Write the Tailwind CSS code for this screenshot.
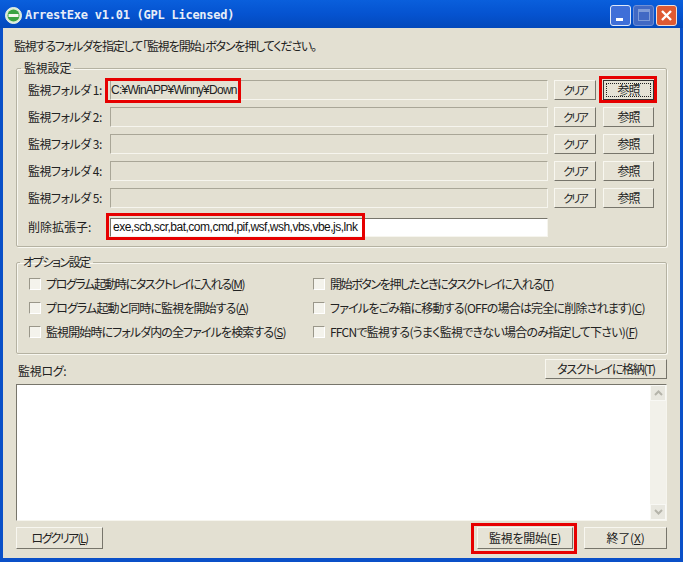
<!DOCTYPE html>
<html lang="ja">
<head>
    <meta charset="UTF-8">
    <title>ArrestExe v1.01 (GPL Licensed)</title>
    <script src="https://cdn.jsdelivr.net/npm/@tailwindcss/browser@4"></script>
</head>
<body class="w-[683px] h-[562px] overflow-hidden bg-[#e3e0d2] font-['Noto_Sans_CJK_JP',sans-serif] [font-feature-settings:'palt'] text-[12px] leading-none text-[#222]">
<div class="flex flex-col h-[562px]">

    <!-- title bar -->
    <div class="h-[28px] shrink-0 flex items-center pt-[2px] pl-[5px] pr-[6px] bg-gradient-to-b from-[#0a5fdc] via-[#0553d0] to-[#0349bb]">
        <svg width="17" height="17" viewBox="0 0 17 17" class="shrink-0">
            <circle cx="8.5" cy="8.5" r="8" fill="#d9ecd6" stroke="#eaf3e6"/>
            <circle cx="8.5" cy="8.5" r="6" fill="#39a341"/>
            <rect x="3.5" y="7" width="10" height="3" fill="#f3f7ee"/>
        </svg>
        <span class="ml-[3px] font-['DejaVu_Sans_Mono',monospace] font-bold text-[12px] tracking-[-0.25px] text-[#e8eef8] whitespace-nowrap">ArrestExe v1.01 (GPL Licensed)</span>
        <div class="ml-auto flex gap-[2px]">
            <div class="w-[21px] h-[21px] rounded-[3px] border border-[#dfe8f8] bg-[#3f6fd8] flex items-end pl-[5px] pb-[4px]">
                <div class="w-[7px] h-[3px] bg-white"></div>
            </div>
            <div class="w-[21px] h-[21px] rounded-[3px] border border-[#6f8fd4] bg-[#4169c4] flex items-center justify-center">
                <div class="w-[12px] h-[12px] border border-[#7f9cd8] border-t-[3px]"></div>
            </div>
            <div class="w-[21px] h-[21px] rounded-[3px] border border-[#f0e0d8] bg-[#df5a32] flex items-center justify-center">
                <svg width="13" height="13" viewBox="0 0 13 13"><path d="M2 2 11 11M11 2 2 11" stroke="#fff" stroke-width="2.4"/></svg>
            </div>
        </div>
    </div>

    <!-- client area -->
    <div class="flex-1 flex flex-col border-x-[3px] border-b-[4px] border-[#0a50c8] pl-[11px] pr-[13px] min-h-0">
        <p class="mt-[12px] h-[12px] whitespace-nowrap tracking-[-1.15px]">監視するフォルダを指定して「監視を開始」ボタンを押してください。</p>

        <!-- folder settings -->
        <fieldset class="mt-[10px] ml-[2px] h-[185px] border border-[#b5b2a2] rounded-[2px] shadow-[inset_1px_1px_0_#f8f7f0,1px_1px_0_#f8f7f0] pl-[11px] pt-[6px] min-w-0">
            <legend class="-ml-[7px] px-[3px] h-[12px] tracking-[-0.2px]">監視設定</legend>
            <div class="flex flex-col gap-[7px]">
                <div class="flex items-center h-[20px]">
                    <span class="w-[82px] whitespace-nowrap tracking-[-0.5px]">監視フォルダ 1:</span>
                    <div class="relative w-[438px] h-[20px] bg-[#e3e0d2] border border-[#a9a697] border-r-[#f6f5ee] border-b-[#f6f5ee] flex items-center font-['Liberation_Sans',sans-serif] tracking-[-0.75px] whitespace-nowrap">C:¥WinAPP¥Winny¥Down
                        <div class="absolute left-[-6px] top-[-3px] w-[136px] h-[25px] border-[3px] border-[#e60000]"></div>
                    </div>
                    <button class="ml-[6px] w-[42px] h-[20px] bg-[#e6e3d6] border border-[#f8f7f0] border-r-[#77756b] border-b-[#77756b] text-[11px] tracking-[-2px]">クリア</button>
                    <div class="relative ml-[7px]">
                        <button class="block w-[51px] h-[20px] bg-[#e6e3d6] border border-[#333] flex items-center justify-center">
                            <span class="w-[43px] h-[12px] leading-[12px] border border-dotted border-[#222] box-content -my-[1px] tracking-[-1px]">参照</span>
                        </button>
                        <div class="absolute left-[-4px] top-[-4px] w-[58px] h-[27px] border-[3px] border-[#e60000]"></div>
                    </div>
                </div>
                <div class="flex items-center h-[20px]">
                    <span class="w-[82px] whitespace-nowrap tracking-[-0.5px]">監視フォルダ 2:</span>
                    <div class="w-[438px] h-[20px] border border-[#a9a697] border-r-[#f6f5ee] border-b-[#f6f5ee]"></div>
                    <button class="ml-[6px] w-[42px] h-[20px] bg-[#e6e3d6] border border-[#f8f7f0] border-r-[#77756b] border-b-[#77756b] text-[11px] tracking-[-2px]">クリア</button>
                    <button class="ml-[7px] w-[51px] h-[20px] bg-[#e6e3d6] border border-[#f8f7f0] border-r-[#77756b] border-b-[#77756b] tracking-[-1px]">参照</button>
                </div>
                <div class="flex items-center h-[20px]">
                    <span class="w-[82px] whitespace-nowrap tracking-[-0.5px]">監視フォルダ 3:</span>
                    <div class="w-[438px] h-[20px] border border-[#a9a697] border-r-[#f6f5ee] border-b-[#f6f5ee]"></div>
                    <button class="ml-[6px] w-[42px] h-[20px] bg-[#e6e3d6] border border-[#f8f7f0] border-r-[#77756b] border-b-[#77756b] text-[11px] tracking-[-2px]">クリア</button>
                    <button class="ml-[7px] w-[51px] h-[20px] bg-[#e6e3d6] border border-[#f8f7f0] border-r-[#77756b] border-b-[#77756b] tracking-[-1px]">参照</button>
                </div>
                <div class="flex items-center h-[20px]">
                    <span class="w-[82px] whitespace-nowrap tracking-[-0.5px]">監視フォルダ 4:</span>
                    <div class="w-[438px] h-[20px] border border-[#a9a697] border-r-[#f6f5ee] border-b-[#f6f5ee]"></div>
                    <button class="ml-[6px] w-[42px] h-[20px] bg-[#e6e3d6] border border-[#f8f7f0] border-r-[#77756b] border-b-[#77756b] text-[11px] tracking-[-2px]">クリア</button>
                    <button class="ml-[7px] w-[51px] h-[20px] bg-[#e6e3d6] border border-[#f8f7f0] border-r-[#77756b] border-b-[#77756b] tracking-[-1px]">参照</button>
                </div>
                <div class="flex items-center h-[20px]">
                    <span class="w-[82px] whitespace-nowrap tracking-[-0.5px]">監視フォルダ 5:</span>
                    <div class="w-[438px] h-[20px] border border-[#a9a697] border-r-[#f6f5ee] border-b-[#f6f5ee]"></div>
                    <button class="ml-[6px] w-[42px] h-[20px] bg-[#e6e3d6] border border-[#f8f7f0] border-r-[#77756b] border-b-[#77756b] text-[11px] tracking-[-2px]">クリア</button>
                    <button class="ml-[7px] w-[51px] h-[20px] bg-[#e6e3d6] border border-[#f8f7f0] border-r-[#77756b] border-b-[#77756b] tracking-[-1px]">参照</button>
                </div>
                <div class="flex items-center h-[20px] mt-[2px]">
                    <span class="w-[82px] whitespace-nowrap">削除拡張子:</span>
                    <div class="relative w-[438px] h-[19px] bg-white border border-[#77756b] border-r-[#f6f5ee] border-b-[#f6f5ee] pl-[2px] flex items-center font-['Liberation_Sans',sans-serif] tracking-[-0.5px] whitespace-nowrap text-[#111]">exe,scb,scr,bat,com,cmd,pif,wsf,wsh,vbs,vbe,js,lnk
                        <div class="absolute left-[-5px] top-[-6px] w-[259px] h-[27px] border-[3px] border-[#e60000]"></div>
                    </div>
                </div>
            </div>
        </fieldset>

        <!-- option settings -->
        <fieldset class="mt-[9px] ml-[2px] h-[98px] border border-[#b5b2a2] rounded-[2px] shadow-[inset_1px_1px_0_#f8f7f0,1px_1px_0_#f8f7f0] pl-[12px] pt-[9px] min-w-0">
            <legend class="-ml-[9px] px-[3px] h-[12px] tracking-[-1.4px]">オプション設定</legend>
            <div class="grid grid-cols-[284px_1fr] gap-y-[11px]">
                <label class="flex items-center h-[13px] gap-[5px] whitespace-nowrap"><span class="w-[12px] h-[12px] shrink-0 bg-[#f4f3ec] border border-[#9a978a] border-r-white border-b-white"></span><span class="tracking-[-1.4px]">プログラム起動時にタスクトレイに入れる(<u>M</u>)</span></label>
                <label class="flex items-center h-[13px] gap-[5px] whitespace-nowrap"><span class="w-[12px] h-[12px] shrink-0 bg-[#f4f3ec] border border-[#9a978a] border-r-white border-b-white"></span><span class="tracking-[-1.4px]">開始ボタンを押したときにタスクトレイに入れる(<u>T</u>)</span></label>
                <label class="flex items-center h-[13px] gap-[5px] whitespace-nowrap"><span class="w-[12px] h-[12px] shrink-0 bg-[#f4f3ec] border border-[#9a978a] border-r-white border-b-white"></span><span class="tracking-[-0.9px]">プログラム起動と同時に監視を開始する(<u>A</u>)</span></label>
                <label class="flex items-center h-[13px] gap-[5px] whitespace-nowrap"><span class="w-[12px] h-[12px] shrink-0 bg-[#f4f3ec] border border-[#9a978a] border-r-white border-b-white"></span><span class="tracking-[-0.8px]">ファイルをごみ箱に移動する(OFFの場合は完全に削除されます)(<u>C</u>)</span></label>
                <label class="flex items-center h-[13px] gap-[5px] whitespace-nowrap"><span class="w-[12px] h-[12px] shrink-0 bg-[#f4f3ec] border border-[#9a978a] border-r-white border-b-white"></span><span class="tracking-[-0.9px]">監視開始時にフォルダ内の全ファイルを検索する(<u>S</u>)</span></label>
                <label class="flex items-center h-[13px] gap-[5px] whitespace-nowrap"><span class="w-[12px] h-[12px] shrink-0 bg-[#f4f3ec] border border-[#9a978a] border-r-white border-b-white"></span><span class="tracking-[-0.75px]">FFCNで監視する(うまく監視できない場合のみ指定して下さい)(<u>F</u>)</span></label>
            </div>
        </fieldset>

        <!-- log -->
        <div class="mt-[5px] flex items-center justify-between h-[20px] ml-[2px]">
            <span class="pl-[2px] pt-[3px] tracking-[-0.3px]">監視ログ:</span>
            <button class="w-[122px] h-[20px] bg-[#e6e3d6] border border-[#f8f7f0] border-r-[#77756b] border-b-[#77756b] tracking-[-1.3px]">タスクトレイに格納(T)</button>
        </div>
        <div class="mt-[5px] ml-[2px] h-[137px] flex bg-white border border-[#77756b] border-r-[#f6f5ee] border-b-[#f6f5ee]">
            <div class="ml-auto w-[16px] bg-[#f2f1ea] flex flex-col justify-between">
                <div class="h-[16px] bg-[#e8e7df] flex items-center justify-center border border-[#f8f8f4]"><svg width="9" height="6" viewBox="0 0 9 6"><path d="M1 5 4.500 1.500 8 5" fill="none" stroke="#b5b4aa" stroke-width="2"/></svg></div>
                <div class="h-[16px] bg-[#e8e7df] flex items-center justify-center border border-[#f8f8f4]"><svg width="9" height="6" viewBox="0 0 9 6"><path d="M1 1 4.500 4.500 8 1" fill="none" stroke="#b5b4aa" stroke-width="2"/></svg></div>
            </div>
        </div>

        <!-- bottom buttons -->
        <div class="mt-[6px] ml-[2px] flex items-center">
            <button class="w-[87px] h-[22px] bg-[#e6e3d6] border border-[#f8f7f0] border-r-[#77756b] border-b-[#77756b] tracking-[-1.6px]">ログクリア(<u>L</u>)</button>
            <button class="relative ml-[374px] w-[96px] h-[22px] bg-[#e6e3d6] border border-[#f8f7f0] border-r-[#77756b] border-b-[#77756b] tracking-[-0.3px]">監視を開始(<u>E</u>)
                <span class="absolute left-[-7px] top-[-5px] w-[106px] h-[31px] border-[3px] border-[#e60000]"></span>
            </button>
            <button class="ml-[11px] w-[83px] h-[22px] bg-[#e6e3d6] border border-[#f8f7f0] border-r-[#77756b] border-b-[#77756b] tracking-[-0.2px]">終了(<u>X</u>)</button>
        </div>
    </div>
</div>
</body>
</html>
